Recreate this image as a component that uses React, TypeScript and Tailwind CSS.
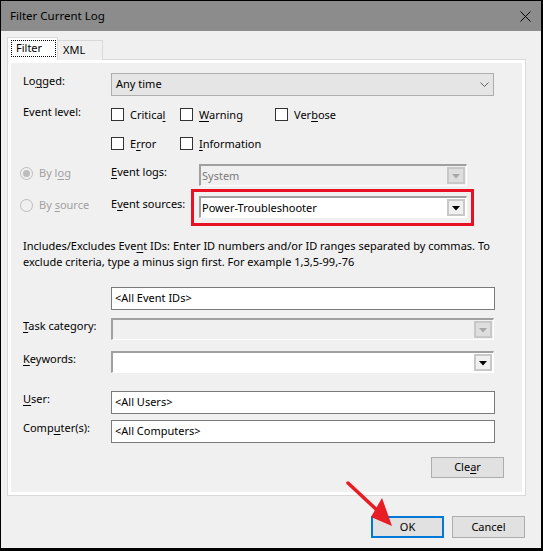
import React from "react";

const font = "font-['Segoe_UI','Noto_Sans',sans-serif]";

function U({ children }: { children: React.ReactNode }) {
  return <span className="underline decoration-1 underline-offset-[2px]">{children}</span>;
}

function Checkbox({ label, width }: { label: React.ReactNode; width: string }) {
  return (
    <div className={`flex h-[13px] items-center ${width}`}>
      <span className="box-border h-[13px] w-[13px] shrink-0 border border-[#333] bg-white" />
      <span className="ml-[6px] whitespace-nowrap leading-[16px]">{label}</span>
    </div>
  );
}

function Radio({ checked, label }: { checked?: boolean; label: React.ReactNode }) {
  return (
    <div className="flex h-[16px] items-center text-[#a0a0a0]">
      <span className="box-border flex h-[13px] w-[13px] items-center justify-center rounded-full border border-[#bcbcbc] bg-[#f0f0f0]">
        {checked ? <span className="h-[7px] w-[7px] rounded-full bg-[#bcbcbc]" /> : null}
      </span>
      <span className="ml-[6px] leading-[16px]">{label}</span>
    </div>
  );
}

function ComboButton({ disabled }: { disabled?: boolean }) {
  return (
    <span
      className={`mt-[1px] mr-[1px] ml-auto box-border flex h-[17px] w-[18px] shrink-0 items-center justify-center border-2 ${
        disabled ? "border-[#c8c8c8] bg-[#dedede]" : "border-[#c8c8c8] bg-[#f0f0f0]"
      }`}
    >
      <svg width="8" height="5" viewBox="0 0 8 5" className="mt-[2px]">
        <polygon points="0,0 8,0 4,4.5" fill={disabled ? "#a8a8a8" : "#000"} />
      </svg>
    </span>
  );
}

function Combo({
  width,
  value,
  disabled,
}: {
  width: string;
  value?: string;
  disabled?: boolean;
}) {
  return (
    <div
      className={`box-border flex h-[22px] ${width} items-start border-t-2 border-l-2 border-r border-b border-t-[#a0a0a0] border-l-[#a0a0a0] border-r-white border-b-white ${
        disabled ? "bg-[#f0f0f0] text-[#7a7a7a]" : "bg-white"
      }`}
    >
      <span className="pl-[1px] pt-[2px] leading-[16px]">{value}</span>
      <ComboButton disabled={disabled} />
    </div>
  );
}

function TextBox({ value }: { value: string }) {
  return (
    <div className="box-border flex h-[23px] w-[384px] items-center border border-[#7a7a7a] bg-white pl-[3px]">
      {value}
    </div>
  );
}

function Row({
  label,
  mt,
  children,
}: {
  label: React.ReactNode;
  mt: string;
  children: React.ReactNode;
}) {
  return (
    <div className={`flex items-start pl-[12px] ${mt}`}>
      <div className="w-[88px] shrink-0 leading-[16px]">{label}</div>
      {children}
    </div>
  );
}

export default function App() {
  return (
    <div
      className={`relative box-border h-[551px] w-[543px] border-t border-l border-r-2 border-b-[3px] border-black bg-[#f0f0f0] text-[11px] text-black ${font}`}
    >
      {/* title bar */}
      <div className="flex h-[30px] items-center justify-between bg-[#8c8c8c] pl-[9px] pr-[10px]">
        <span className="text-[11.5px] leading-[16px]">Filter Current Log</span>
        <svg width="11" height="11" viewBox="0 0 11 11">
          <path d="M0.5 0.5 L10.5 10.5 M10.5 0.5 L0.5 10.5" stroke="#000" strokeWidth="1" />
        </svg>
      </div>

      <div className="pl-[6px] pt-[6px]">
        {/* tabs */}
        <div className="relative z-10 -mb-[1px] flex items-end">
          <div className="box-border flex h-[23px] w-[51px] items-start border border-b-0 border-[#d9d9d9] bg-white pl-[3px] pt-[2px]">
            <span className="box-border flex h-[17px] w-[45px] items-center border border-dotted border-black pl-[4px]">
              Filter
            </span>
          </div>
          <div className="box-border flex h-[20px] w-[45px] items-center border border-l-0 border-b-0 border-[#d9d9d9] bg-[#f0f0f0] pl-[5px]">
            XML
          </div>
        </div>

        {/* panel */}
        <div className="box-border h-[437px] w-[519px] border border-[#d9d9d9] bg-white p-[3px]">
          <div className="flex h-full flex-col bg-[#f0f0f0]">
            <Row label={<>Lo<U>g</U>ged:</>} mt="mt-[10px]">
              <div className="box-border flex h-[23px] w-[383px] items-center justify-between border border-[#adadad] bg-[#e5e5e5] pl-[4px] pr-[4px]">
                <span>Any time</span>
                <svg width="9" height="5" viewBox="0 0 9 5">
                  <path d="M0.5 0.5 L4.5 4.5 L8.5 0.5" stroke="#606060" fill="none" />
                </svg>
              </div>
            </Row>

            <Row label="Event level:" mt="mt-[8px]">
              <div className="flex flex-col gap-[16px] pt-[4px]">
                <div className="flex">
                  <Checkbox width="w-[69px]" label={<>Critica<U>l</U></>} />
                  <Checkbox width="w-[95px]" label={<><U>W</U>arning</>} />
                  <Checkbox width="w-[80px]" label={<>Ver<U>b</U>ose</>} />
                </div>
                <div className="flex">
                  <Checkbox width="w-[69px]" label={<>E<U>r</U>ror</>} />
                  <Checkbox width="w-[95px]" label={<><U>I</U>nformation</>} />
                </div>
              </div>
            </Row>

            <div className="mt-[14px] flex items-start pl-[9px]">
              <div className="w-[91px] shrink-0 pt-[1px]">
                <Radio checked label={<>By l<U>o</U>g</>} />
              </div>
              <div className="w-[88px] shrink-0 leading-[16px]">
                <U>E</U>vent logs:
              </div>
              <Combo width="w-[268px]" value="System" disabled />
            </div>

            <div className="mt-[10px] flex items-start pl-[9px]">
              <div className="w-[91px] shrink-0 pt-[1px]">
                <Radio label={<>By <U>s</U>ource</>} />
              </div>
              <div className="w-[88px] shrink-0 leading-[16px]">
                E<U>v</U>ent sources:
              </div>
              <div className="relative">
                <Combo width="w-[268px]" value="Power-Troubleshooter" />
                <div className="pointer-events-none absolute -top-[7px] -left-[8px] -right-[7px] -bottom-[8px] border-[3px] border-[#e81123]" />
              </div>
            </div>

            <div className="mt-[20px] pl-[12px] leading-[16px] whitespace-nowrap">
              Includes/Excludes Eve<U>n</U>t IDs: Enter ID numbers and/or ID ranges separated by commas. To
              <br />
              exclude criteria, type a minus sign first. For example 1,3,5-99,-76
            </div>

            <div className="mt-[17px] pl-[100px]">
              <TextBox value="<All Event IDs>" />
            </div>

            <Row label={<><U>T</U>ask category:</>} mt="mt-[8px]">
              <Combo width="w-[383px]" disabled />
            </Row>

            <Row label={<><U>K</U>eywords:</>} mt="mt-[11px]">
              <Combo width="w-[383px]" />
            </Row>

            <Row label={<><U>U</U>ser:</>} mt="mt-[18px]">
              <TextBox value="<All Users>" />
            </Row>

            <Row label={<>Comp<U>u</U>ter(s):</>} mt="mt-[6px]">
              <TextBox value="<All Computers>" />
            </Row>

            <div className="mt-[14px] pl-[420px]">
              <div className="box-border flex h-[21px] w-[73px] items-center justify-center border border-[#adadad] bg-[#e1e1e1]">
                Cle<U>a</U>r
              </div>
            </div>
          </div>
        </div>

        {/* dialog buttons */}
        <div className="mt-[20px] flex w-[519px] justify-end gap-[8px] pr-[1px]">
          <div className="box-border flex h-[22px] w-[73px] items-center justify-center border-2 border-[#0078d7] bg-[#e1e1e1]">
            OK
          </div>
          <div className="box-border flex h-[22px] w-[73px] items-center justify-center border border-[#adadad] bg-[#e1e1e1]">
            Cancel
          </div>
        </div>
      </div>

      {/* red annotation arrow */}
      <svg className="pointer-events-none absolute left-0 top-0" width="543" height="551" viewBox="0 0 543 551">
        <line x1="347" y1="482" x2="377" y2="510" stroke="#e81c24" strokeWidth="3.5" strokeLinecap="round" />
        <polygon points="370,516 381,497 391,525" fill="#e81c24" />
      </svg>
    </div>
  );
}
